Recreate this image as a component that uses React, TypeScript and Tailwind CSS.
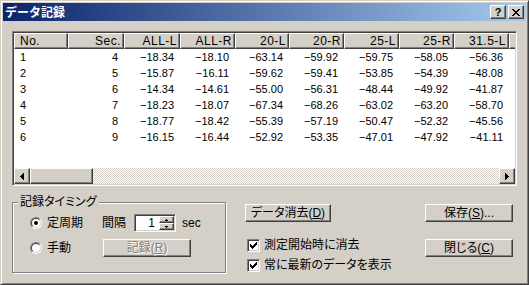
import React from "react";

// classic win2k bevels
const raised =
  "border border-t-white border-l-white border-r-[#404040] border-b-[#404040] shadow-[inset_-1px_-1px_0_#808080]";
const sunken =
  "border border-t-[#808080] border-l-[#808080] border-r-white border-b-white shadow-[inset_1px_1px_0_#404040,inset_-1px_-1px_0_#d4d0c8]";

const CLOSE_X = ["##....##", ".##..##.", "..####..", "...##...", "..####..", ".##..##.", "##....##"];
const ARROW_L = ["...#", "..##", ".###", "####", ".###", "..##", "...#"];
const ARROW_R = ["#...", "##..", "###.", "####", "###.", "##..", "#..."];
const SPIN_UP = [".#.", "###"];
const SPIN_DN = ["###", ".#."];
const CHECK = ["......#", ".....##", "#...###", "##.###.", "#####..", ".###...", "..#...."];

function Bits({ map }: { map: string[] }) {
  const w = map[0].length;
  const h = map.length;
  return (
    <svg width={w} height={h} viewBox={`0 0 ${w} ${h}`} shapeRendering="crispEdges" className="block">
      {map.flatMap((row, y) =>
        row.split("").map((c, x) => (c === "#" ? <rect key={`${x}-${y}`} x={x} y={y} width={1} height={1} fill="#000" /> : null))
      )}
    </svg>
  );
}

const COLS = [
  { label: "No.", w: "w-[54px]", left: true },
  { label: "Sec.", w: "w-[56px]" },
  { label: "ALL-L", w: "w-[56px]" },
  { label: "ALL-R", w: "w-[55px]" },
  { label: "20-L", w: "w-[54px]" },
  { label: "20-R", w: "w-[55px]" },
  { label: "25-L", w: "w-[55px]" },
  { label: "25-R", w: "w-[55px]" },
  { label: "31.5-L", w: "w-[55px]" },
  { label: "", w: "w-[55px]" },
];

const ROWS = [
  ["1", "4", "−18.34", "−18.10", "−63.14", "−59.92", "−59.75", "−58.05", "−56.36", ""],
  ["2", "5", "−15.87", "−16.11", "−59.62", "−59.41", "−53.85", "−54.39", "−48.08", ""],
  ["3", "6", "−14.34", "−14.61", "−55.00", "−56.31", "−48.44", "−49.92", "−41.87", ""],
  ["4", "7", "−18.23", "−18.07", "−67.34", "−68.26", "−63.02", "−63.20", "−58.70", ""],
  ["5", "8", "−18.77", "−18.42", "−55.39", "−57.19", "−50.47", "−52.32", "−45.56", ""],
  ["6", "9", "−16.15", "−16.44", "−52.92", "−53.35", "−47.01", "−47.92", "−41.11", ""],
];

function Btn({ className = "", disabled, children }: { className?: string; disabled?: boolean; children: React.ReactNode }) {
  return (
    <div
      className={`${raised} bg-[#d4d0c8] h-[18px] flex items-center justify-center leading-none ${
        disabled ? "text-[#808080] [text-shadow:1px_1px_0_#fff]" : ""
      } ${className}`}
    >
      {children}
    </div>
  );
}

function Radio({ checked }: { checked?: boolean }) {
  return (
    <div className="w-[12px] h-[12px] rounded-full border border-t-[#808080] border-l-[#808080] border-r-white border-b-white">
      <div className="w-full h-full rounded-full bg-white border border-t-[#404040] border-l-[#404040] border-r-[#d4d0c8] border-b-[#d4d0c8] flex items-center justify-center">
        {checked && <div className="w-[4px] h-[4px] rounded-full bg-black" />}
      </div>
    </div>
  );
}

function Check({ label }: { label: string }) {
  return (
    <div className="h-[16px] flex items-center gap-[4px]">
      <div className={`${sunken} w-[13px] h-[13px] bg-white flex items-center justify-center`}>
        <Bits map={CHECK} />
      </div>
      <span>{label}</span>
    </div>
  );
}

function ListView() {
  return (
    <div className={`${sunken} w-[505px] h-[155px] bg-white p-[1px] flex flex-col`}>
      <div className="flex-1 overflow-hidden font-['Liberation_Sans',sans-serif]">
        <div className="flex w-max h-[16px]">
          {COLS.map((c, i) => (
            <div
              key={i}
              className={`${raised} ${c.w} bg-[#d4d0c8] h-[16px] flex items-center text-[12px] tracking-[0.5px] ${
                c.left ? "pl-[5px]" : "justify-end pr-[2px]"
              }`}
            >
              {c.label}
            </div>
          ))}
        </div>
        {ROWS.map((r, ri) => (
          <div key={ri} className="flex w-max h-[16px] text-[11px] leading-[16px]">
            {r.map((v, ci) => (
              <div key={ci} className={`${COLS[ci].w} ${COLS[ci].left ? "pl-[6px]" : "text-right pr-[6px]"}`}>
                {v}
              </div>
            ))}
          </div>
        ))}
      </div>
      <div className="h-[16px] flex">
        <div className={`${raised} bg-[#d4d0c8] w-[16px] h-[16px] flex items-center justify-center`}>
          <Bits map={ARROW_L} />
        </div>
        <div className={`${raised} bg-[#d4d0c8] w-[63px] h-[16px]`} />
        <div className="flex-1 bg-[repeating-conic-gradient(#d4d0c8_0%_25%,#ffffff_0%_50%)] bg-[length:2px_2px]" />
        <div className={`${raised} bg-[#d4d0c8] w-[16px] h-[16px] flex items-center justify-center`}>
          <Bits map={ARROW_R} />
        </div>
      </div>
    </div>
  );
}

export default function App() {
  return (
    <div className="w-[529px] h-[285px] bg-[#d4d0c8] border border-t-[#d4d0c8] border-l-[#d4d0c8] border-r-[#404040] border-b-[#404040] shadow-[inset_1px_1px_0_#fff,inset_-1px_-1px_0_#808080] p-[2px] flex flex-col text-[12px] text-black font-['Liberation_Sans','Noto_Sans_CJK_JP',sans-serif] [font-feature-settings:'palt']">
      {/* title bar */}
      <div className="h-[18px] flex items-center bg-[linear-gradient(to_right,#0a246a,#a6caf0)]">
        <span className="pl-[2px] flex-1 text-white font-bold text-[12px] leading-none [font-feature-settings:normal] font-['Noto_Sans_CJK_JP',sans-serif]">
          データ記録
        </span>
        <div className="flex items-center gap-[2px] pr-[2px]">
          <div className={`${raised} bg-[#d4d0c8] w-[16px] h-[14px] flex items-center justify-center text-[11px] font-bold leading-none`}>
            ?
          </div>
          <div className={`${raised} bg-[#d4d0c8] w-[16px] h-[14px] flex items-center justify-center`}>
            <Bits map={CLOSE_X} />
          </div>
        </div>
      </div>

      <div className="flex flex-col px-[9px] pt-[10px]">
        <ListView />

        <div className="flex items-start mt-[9px]">
          <fieldset className="w-[214px] border border-[#808080] shadow-[inset_1px_1px_0_#fff,1px_1px_0_#fff]">
            <legend className="ml-[5px] px-[2px] leading-[14px] bg-[#d4d0c8]">記録タイミング</legend>
            <div className="pl-[17px] pt-[5px] pb-[15px] flex flex-col gap-[7px]">
              <div className="h-[18px] flex items-center">
                <div className="w-[72px] flex items-center gap-[5px]">
                  <Radio checked />
                  <span>定周期</span>
                </div>
                <span className="w-[32px]">間隔</span>
                <div className={`${sunken} w-[42px] h-[18px] bg-white p-[1px] flex`}>
                  <div className="flex-1 text-right pr-[4px] leading-[14px]">1</div>
                  <div className="w-[15px] flex flex-col">
                    <div className={`${raised} bg-[#d4d0c8] h-[7px] flex items-center justify-center`}>
                      <Bits map={SPIN_UP} />
                    </div>
                    <div className={`${raised} bg-[#d4d0c8] h-[7px] flex items-center justify-center`}>
                      <Bits map={SPIN_DN} />
                    </div>
                  </div>
                </div>
                <span className="ml-[6px]">sec</span>
              </div>
              <div className="h-[18px] flex items-center">
                <div className="w-[73px] flex items-center gap-[5px]">
                  <Radio />
                  <span>手動</span>
                </div>
                <Btn disabled className="w-[88px]">
                  記録(<span className="underline">R</span>)
                </Btn>
              </div>
            </div>
          </fieldset>

          <div className="ml-[19px] pt-[9px] w-[268px] flex flex-col">
            <div className="flex justify-between">
              <Btn className="w-[86px]">
                データ消去(<span className="underline">D</span>)
              </Btn>
              <Btn className="w-[88px]">
                保存(<span className="underline">S</span>)...
              </Btn>
            </div>
            <div className="flex justify-between mt-[15px]">
              <div className="flex flex-col gap-[4px] pl-[2px]">
                <Check label="測定開始時に消去" />
                <Check label="常に最新のデータを表示" />
              </div>
              <Btn className="w-[88px] mt-[2px]">
                閉じる(<span className="underline">C</span>)
              </Btn>
            </div>
          </div>
        </div>
      </div>
    </div>
  );
}
